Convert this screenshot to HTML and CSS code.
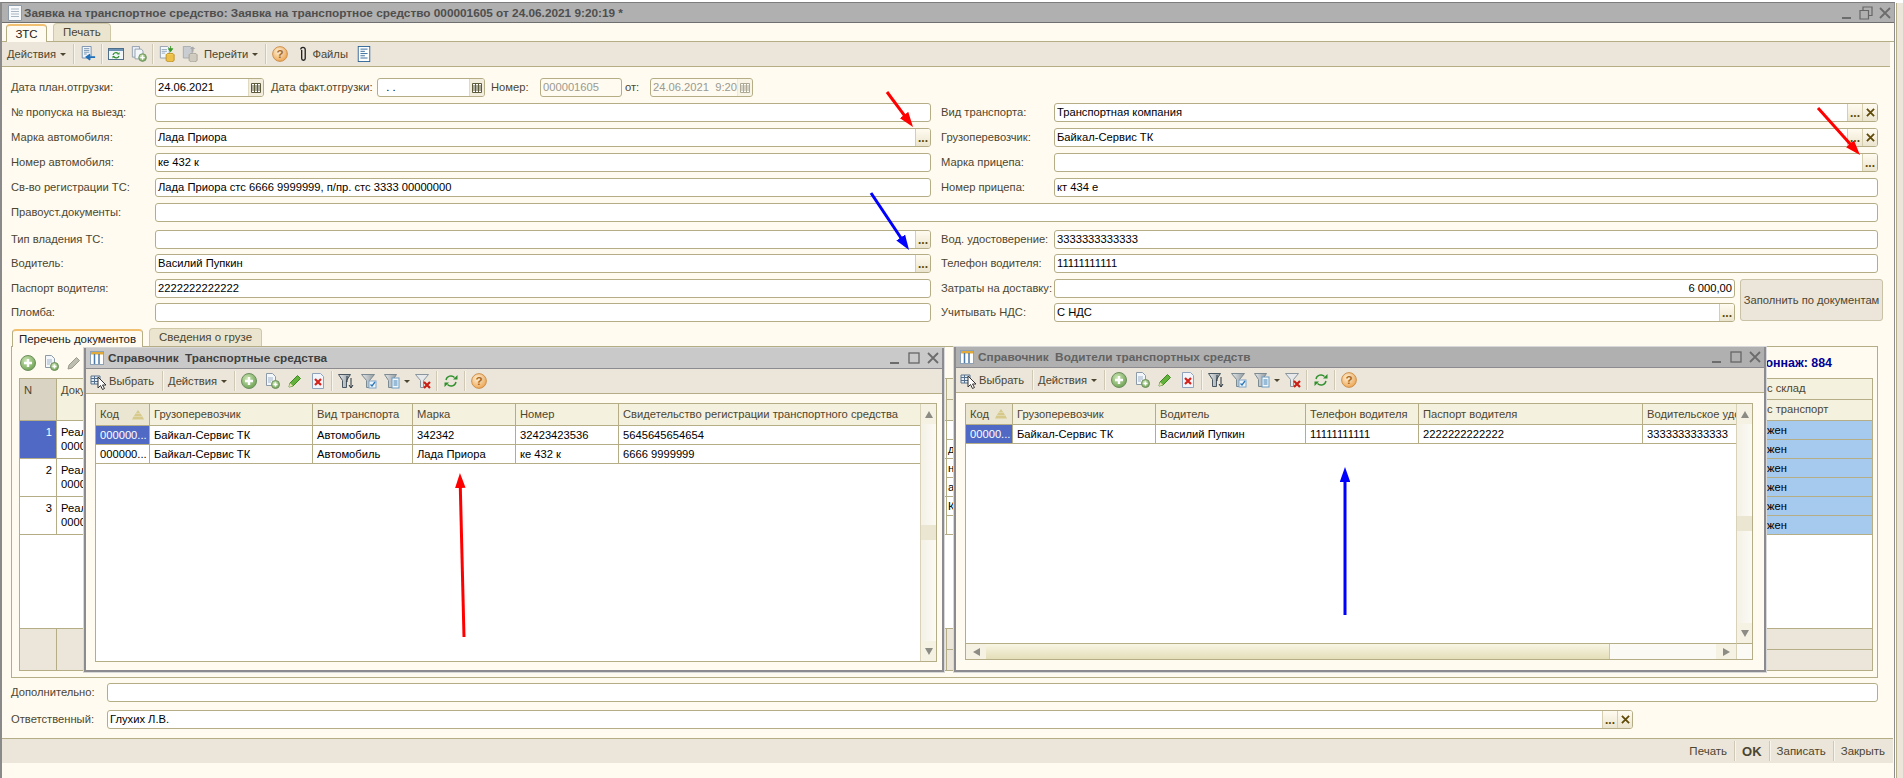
FILE: index.html
```html
<!DOCTYPE html>
<html lang="ru">
<head>
  <meta charset="UTF-8">
  <title>Заявка на транспортное средство</title>
  <link rel="stylesheet" href="styles.css">
</head>
<body>

<svg class="defs" xmlns="http://www.w3.org/2000/svg">
  <defs>
    <radialGradient id="g-green" cx="40%" cy="35%" r="70%"><stop offset="0" stop-color="#cfe8b8"/><stop offset="1" stop-color="#6a9f4e"/></radialGradient>
    <radialGradient id="g-orange" cx="40%" cy="35%" r="70%"><stop offset="0" stop-color="#fdf0d8"/><stop offset="1" stop-color="#eda24c"/></radialGradient>
    <linearGradient id="g-funnel" x1="0" x2="1"><stop offset="0" stop-color="#e8e8e8"/><stop offset="1" stop-color="#8e9aa0"/></linearGradient>
    <marker id="head-red" viewBox="0 0 10 7" refX="6" refY="3.5" markerWidth="5" markerHeight="3.5" orient="auto"><path d="M0 0L10 3.5L0 7z" fill="#f00"/></marker>
    <marker id="head-blue" viewBox="0 0 10 7" refX="6" refY="3.5" markerWidth="5" markerHeight="3.5" orient="auto"><path d="M0 0L10 3.5L0 7z" fill="#00f"/></marker>
  </defs>
  <symbol id="i-plus" viewBox="0 0 16 16"><circle cx="8" cy="8" r="7.5" fill="url(#g-green)" stroke="#6f8f60"/><path d="M8 4v8M4 8h8" stroke="#fff" stroke-width="2.4"/></symbol>
  <symbol id="i-docplus" viewBox="0 0 16 16"><path d="M2.500 .5h6l3 3v9h-9z" fill="#f4f7fa" stroke="#8d9aa8"/><path d="M4 5h5M4 7h5M4 9h3" stroke="#9fb4c8"/><circle cx="11.500" cy="11.500" r="4" fill="url(#g-green)" stroke="#6f8f60"/><path d="M11.500 9.500v4M9.500 11.500h4" stroke="#fff" stroke-width="1.400"/></symbol>
  <symbol id="i-pencil" viewBox="0 0 16 16"><path d="M2 14l1-4 7.500-7.500 3 3L6 13z" fill="#62b23c" stroke="#3e8a22"/><path d="M2 14l1-4 3 3z" fill="#e8e2b0"/></symbol>
  <symbol id="i-pencil-off" viewBox="0 0 16 16"><path d="M2 14l1-4 7.500-7.500 3 3L6 13z" fill="#bdbdb0" stroke="#9a9a8c"/></symbol>
  <symbol id="i-docx" viewBox="0 0 16 16"><path d="M2.500 .5h8l3 3v12h-11z" fill="#f2f6fb" stroke="#8fa3bc"/><path d="M5 6l6 6M11 6l-6 6" stroke="#d3231a" stroke-width="2.200"/></symbol>
  <symbol id="i-f-sort" viewBox="0 0 16 16"><path d="M.5 1.500h12l-4 6v7h-4v-7z" fill="url(#g-funnel)" stroke="#4a5660"/><path d="M13 5v9M11 12l2 3 2-3" stroke="#23303c" fill="none"/><path d="M9 3v6" stroke="#23303c"/></symbol>
  <symbol id="i-f-check" viewBox="0 0 16 16"><path d="M.5 1.500h13l-5 6v7h-3v-7z" fill="url(#g-funnel)" stroke="#7c8a92"/><rect x="8" y="8" width="7" height="7" fill="#eef5fb" stroke="#7fa6c8"/><path d="M9.500 11.500l1.500 1.500 3-4" stroke="#2b78b8" fill="none" stroke-width="1.300"/></symbol>
  <symbol id="i-f-list" viewBox="0 0 16 16"><path d="M.5 1.500h12l-4 6v7h-4v-7z" fill="url(#g-funnel)" stroke="#7c8a92"/><rect x="8" y="5" width="7" height="10" fill="#f2f7fb" stroke="#6e9cc0"/><path d="M9.500 8h4M9.500 10h4M9.500 12h4" stroke="#3f80b4"/></symbol>
  <symbol id="i-f-x" viewBox="0 0 16 16"><path d="M.5 1.500h13l-5 6v7h-3v-7z" fill="#e6e8ea" stroke="#8a969e"/><path d="M9 9l6 6M15 9l-6 6" stroke="#c81e14" stroke-width="2.200"/></symbol>
  <symbol id="i-refresh" viewBox="0 0 16 16"><path d="M3 7A5 5 0 0 1 11.500 4.500M13 9A5 5 0 0 1 4.500 11.500" fill="none" stroke="#2f8f2c" stroke-width="1.400"/><path d="M10 6.500h4.500V2zM6 9.500H1.500V14z" fill="#2f8f2c"/></symbol>
  <symbol id="i-help" viewBox="0 0 18 18"><circle cx="9" cy="9" r="8.300" fill="url(#g-orange)" stroke="#c98a44"/><text x="9" y="13.500" text-anchor="middle" font-family="Liberation Sans" font-weight="700" font-size="13" fill="#a5692a">?</text></symbol>
  <symbol id="i-select" viewBox="0 0 18 18"><path d="M1 4h9v8H1z" fill="#e6edf4" stroke="#55708c"/><path d="M1 6.500h9M1 9.500h9M4.500 4v8" stroke="#55708c"/><path d="M8 5v11l2.500-2.500 2 4 2-1-2-3.500H16z" fill="#fff" stroke="#333"/></symbol>
  <symbol id="i-doc-back" viewBox="0 0 18 18"><path d="M2.500 .5h10v13h-10z" fill="#f2f6fa" stroke="#6d8aa8"/><path d="M4.500 3h6M4.500 5h6M4.500 7h6M4.500 9h3" stroke="#6f8eac"/><path d="M17 12.500H9M11.500 9.500l-4 3 4 3" fill="none" stroke="#1f6fb8" stroke-width="2.200"/></symbol>
  <symbol id="i-win-refresh" viewBox="0 0 16 16"><rect x=".5" y="2.500" width="15" height="11" fill="#f1f6fa" stroke="#4d6f8c"/><path d="M1 3h14v2H1z" fill="#6d93b4"/><path d="M5 9a3 3 0 0 1 5-1.500M11 10a3 3 0 0 1-5 1" fill="none" stroke="#2f8f2c" stroke-width="1.200"/><path d="M9 8.500h2.500V6zM7 10H4.500v2.500z" fill="#2f8f2c"/></symbol>
  <symbol id="i-docs-plus" viewBox="0 0 18 18"><path d="M1.500 .5h8v12h-8z" fill="#e8eef4" stroke="#8d9aa8"/><path d="M4.500 3.500h7l2 2v9h-9z" fill="#f4f7fa" stroke="#8d9aa8"/><circle cx="13" cy="13" r="4.300" fill="url(#g-green)" stroke="#6f8f60"/><path d="M13 10.500v5M10.500 13h5" stroke="#fff" stroke-width="1.500"/></symbol>
  <symbol id="i-doc-coins" viewBox="0 0 18 18"><path d="M1.500 .5h8l2 2v11h-10z" fill="#f4f7fa" stroke="#8d9aa8"/><path d="M3 4h6M3 6h6M3 8h4" stroke="#8fa6bc"/><path d="M13 0v4M10.500 3l2.500 3.500L15.500 3z" fill="#3c9a2c" stroke="#3c9a2c"/><ellipse cx="12.500" cy="10" rx="4.500" ry="1.800" fill="#f2cd55" stroke="#b98f20"/><path d="M8 10v6c0 1 2 1.800 4.500 1.800S17 17 17 16v-6" fill="#eec04a" stroke="#b98f20"/></symbol>
  <symbol id="i-doc-coins-off" viewBox="0 0 18 18"><path d="M1.500 .5h8l2 2v11h-10z" fill="#c9ccd0" stroke="#a5a8ac"/><path d="M9 3.500l3-3 3 3h-2v3h-2v-3z" fill="#aaa"/><ellipse cx="12.500" cy="10" rx="4.500" ry="1.800" fill="#d4d0c4" stroke="#a5a296"/><path d="M8 10v6c0 1 2 1.800 4.500 1.800S17 17 17 16v-6" fill="#cfcbbf" stroke="#a5a296"/></symbol>
  <symbol id="i-clip" viewBox="0 0 12 18"><path d="M4 4v9.500a2 2 0 0 0 4 0V3.500a2.500 2.500 0 0 0-5 0" transform="translate(.5 .5)" fill="none" stroke="#222" stroke-width="1.500"/></symbol>
  <symbol id="i-report" viewBox="0 0 16 18"><rect x="1.500" y=".5" width="13" height="17" fill="#fff" stroke="#275f94"/><path d="M4 3.500h8M4 6h5M4 8.500h8M4 11h5M4 13.500h8" stroke="#275f94"/></symbol>
  <symbol id="i-form" viewBox="0 0 14 16"><path d="M.5 .5h13v15H.5z" fill="#f7f9fb" stroke="#8e9ba8"/><path d="M3 4h8M3 6.500h8M3 9h8M3 11.500h8" stroke="#a9b6c2"/></symbol>
  <symbol id="i-catalog" viewBox="0 0 14 14"><rect x=".5" y=".5" width="13" height="13" fill="#fff" stroke="#8da2b6"/><path d="M1 1h12v2.500H1z" fill="#e0a93c"/><path d="M4.500 3v10M9 3v10" stroke="#4d7aa5" stroke-width="1.500"/></symbol>
  <symbol id="i-cal" viewBox="0 0 12 12"><path d="M1.500 1.500h9v9h-9zM1.500 4h9M1.500 6h9M1.500 8h9M4.500 1.500v9M7.500 1.500v9" fill="#fff" stroke="#5e5a3c"/></symbol>
  <symbol id="i-x" viewBox="0 0 10 10"><path d="M1 1l8 8M9 1l-8 8" stroke="#5f4a08" stroke-width="2"/></symbol>
  <symbol id="i-min" viewBox="0 0 14 14"><path d="M2 12h9" stroke="#6c6c6c" stroke-width="2"/></symbol>
  <symbol id="i-max" viewBox="0 0 14 14"><rect x="2" y="2" width="10" height="10" fill="none" stroke="#666" stroke-width="1.300"/></symbol>
  <symbol id="i-restore" viewBox="0 0 14 14"><path d="M1 4.500h8.500V13H1zM4 4.500V1h9v8.500H9.500" fill="none" stroke="#666" stroke-width="1.200"/></symbol>
  <symbol id="i-close" viewBox="0 0 14 14"><path d="M2 2l10 10M12 2L2 12" stroke="#6c6c6c" stroke-width="1.800"/></symbol>
  <symbol id="i-sort" viewBox="0 0 14 10"><path d="M7 0l2 3H5zM4.500 3.500h5L11 6H3zM2.500 6.500h9L13 9.500H1z" fill="#d6c98a"/></symbol>
</svg>

<div class="page">
  <div class="window">
    <div class="titlebar">
      <svg class="title-icon"><use href="#i-form"/></svg>
      <span class="title-text">Заявка на транспортное средство: Заявка на транспортное средство 000001605 от 24.06.2021 9:20:19 *</span>
      <div class="win-controls main-controls">
        <svg><use href="#i-min"/></svg><svg><use href="#i-restore"/></svg><svg><use href="#i-close"/></svg>
      </div>
    </div>

    <div class="tabs top-tabs">
      <div class="tab active top-first">ЗТС</div>
      <div class="tab">Печать</div>
    </div>

    <div class="toolbar main-toolbar">
      <span class="tb-text">Действия</span><i class="caret"></i>
      <i class="sep"></i>
      <span class="tb-btn"><svg><use href="#i-doc-back"/></svg></span>
      <i class="sep"></i>
      <span class="tb-btn"><svg><use href="#i-win-refresh"/></svg></span>
      <span class="tb-btn"><svg><use href="#i-docs-plus"/></svg></span>
      <i class="sep"></i>
      <span class="tb-btn"><svg><use href="#i-doc-coins"/></svg></span>
      <span class="tb-btn"><svg><use href="#i-doc-coins-off"/></svg></span>
      <span class="tb-text goto">Перейти</span><i class="caret"></i>
      <i class="sep"></i>
      <span class="tb-btn"><svg><use href="#i-help"/></svg></span>
      <span class="tb-btn"><svg><use href="#i-clip"/></svg></span>
      <span class="tb-text files">Файлы</span>
      <span class="tb-btn"><svg><use href="#i-report"/></svg></span>
    </div>

    <div class="date-row">
      <label class="lbl lbl-first">Дата план.отгрузки:</label>
      <div class="field w-plan"><span class="val">24.06.2021</span><span class="cal"><svg><use href="#i-cal"/></svg></span></div>
      <label class="lbl lbl-fact">Дата факт.отгрузки:</label>
      <div class="field w-fact"><span class="val">&nbsp; . .</span><span class="cal"><svg><use href="#i-cal"/></svg></span></div>
      <label class="lbl lbl-num">Номер:</label>
      <div class="field w-num off"><span class="val">000001605</span></div>
      <label class="lbl lbl-from">от:</label>
      <div class="field w-from off"><span class="val">24.06.2021&nbsp; 9:20</span><span class="cal"><svg><use href="#i-cal"/></svg></span></div>
    </div>

    <div class="form-grid">
      <label class="lbl">№ пропуска на выезд:</label>
      <div class="field"></div>
      <label class="lbl lbl-r">Вид транспорта:</label>
      <div class="field span-2"><span class="val">Транспортная компания</span><button class="pick">...</button><button class="pick"><svg><use href="#i-x"/></svg></button></div>

      <label class="lbl">Марка автомобиля:</label>
      <div class="field"><span class="val">Лада Приора</span><button class="pick">...</button></div>
      <label class="lbl lbl-r">Грузоперевозчик:</label>
      <div class="field span-2"><span class="val">Байкал-Сервис ТК</span><button class="pick">...</button><button class="pick"><svg><use href="#i-x"/></svg></button></div>

      <label class="lbl">Номер автомобиля:</label>
      <div class="field"><span class="val">ке 432 к</span></div>
      <label class="lbl lbl-r">Марка прицепа:</label>
      <div class="field span-2"><button class="pick">...</button></div>

      <label class="lbl">Св-во регистрации ТС:</label>
      <div class="field"><span class="val">Лада Приора стс 6666 9999999, п/пр. стс 3333 00000000</span></div>
      <label class="lbl lbl-r">Номер прицепа:</label>
      <div class="field span-2"><span class="val">кт 434 е</span></div>

      <label class="lbl">Правоуст.документы:</label>
      <div class="field span-all"></div>

      <label class="lbl">Тип владения ТС:</label>
      <div class="field"><button class="pick">...</button></div>
      <label class="lbl lbl-r">Вод. удостоверение:</label>
      <div class="field span-2"><span class="val">3333333333333</span></div>

      <label class="lbl">Водитель:</label>
      <div class="field"><span class="val">Василий Пупкин</span><button class="pick">...</button></div>
      <label class="lbl lbl-r">Телефон водителя:</label>
      <div class="field span-2"><span class="val">11111111111</span></div>

      <label class="lbl">Паспорт водителя:</label>
      <div class="field"><span class="val">2222222222222</span></div>
      <label class="lbl lbl-r">Затраты на доставку:</label>
      <div class="field"><span class="val num">6 000,00</span></div>
      <button class="fill-btn">Заполнить по документам</button>

      <label class="lbl">Пломба:</label>
      <div class="field"></div>
      <label class="lbl lbl-r">Учитывать НДС:</label>
      <div class="field"><span class="val">С НДС</span><button class="pick">...</button></div>
    </div>

    <div class="tabs doc-tabs">
      <div class="tab active doc-first">Перечень документов</div>
      <div class="tab">Сведения о грузе</div>
    </div>

    <div class="doc-panel">
      <div class="doc-tools">
        <span class="tb-btn"><svg><use href="#i-plus"/></svg></span>
        <span class="tb-btn"><svg><use href="#i-docplus"/></svg></span>
        <span class="tb-btn"><svg><use href="#i-pencil-off"/></svg></span>
        <span class="tonnage">Тоннаж: 884</span>
      </div>
      <div class="doc-table">
        <div class="doc-row head">
          <div class="c-n sel-head">N</div>
          <div class="c-doc">Документ</div>
          <div class="c-stack">
            <div class="sub"><span class="c-mid"></span><span class="c-last">с склад</span></div>
            <div class="sub"><span class="c-mid"></span><span class="c-last">с транспорт</span></div>
          </div>
        </div>
        <div class="doc-row">
          <div class="c-n current">1</div>
          <div class="c-doc">Реал<br>0000</div>
          <div class="c-stack">
            <div class="sub"><span class="c-mid"></span><span class="c-last mark">жен</span></div>
            <div class="sub"><span class="c-mid">д</span><span class="c-last mark">жен</span></div>
          </div>
        </div>
        <div class="doc-row">
          <div class="c-n">2</div>
          <div class="c-doc">Реал<br>0000</div>
          <div class="c-stack">
            <div class="sub"><span class="c-mid">н,</span><span class="c-last mark">жен</span></div>
            <div class="sub"><span class="c-mid">а</span><span class="c-last mark">жен</span></div>
          </div>
        </div>
        <div class="doc-row">
          <div class="c-n">3</div>
          <div class="c-doc">Реал<br>0000</div>
          <div class="c-stack">
            <div class="sub"><span class="c-mid">К</span><span class="c-last mark">жен</span></div>
            <div class="sub"><span class="c-mid"></span><span class="c-last mark">жен</span></div>
          </div>
        </div>
        <div class="doc-fill"></div>
        <div class="doc-row foot">
          <div class="c-n"></div>
          <div class="c-doc"></div>
          <div class="c-stack">
            <div class="sub"><span class="c-mid"></span><span class="c-last"></span></div>
            <div class="sub"><span class="c-mid"></span><span class="c-last"></span></div>
          </div>
        </div>
      </div>
    </div>

    <div class="extra-row">
      <label class="lbl lbl-extra">Дополнительно:</label>
      <div class="field grow"></div>
    </div>
    <div class="extra-row resp-row">
      <label class="lbl lbl-extra">Ответственный:</label>
      <div class="field w-resp"><span class="val">Глухих Л.В.</span><button class="pick">...</button><button class="pick"><svg><use href="#i-x"/></svg></button></div>
    </div>

    <div class="footer">
      <span class="foot-btn">Печать</span><i class="sep"></i>
      <span class="foot-btn ok">OK</span><i class="sep"></i>
      <span class="foot-btn">Записать</span><i class="sep"></i>
      <span class="foot-btn">Закрыть</span>
    </div>
  </div>

  <!-- окна справочников -->
  <div class="popup popup-cars">
    <div class="pop-title">
      <svg class="pop-icon"><use href="#i-catalog"/></svg>
      <span>Справочник&nbsp; Транспортные средства</span>
      <div class="win-controls"><svg><use href="#i-min"/></svg><svg><use href="#i-max"/></svg><svg><use href="#i-close"/></svg></div>
    </div>
    <div class="toolbar pop-toolbar">
      <span class="pop-select"><svg><use href="#i-select"/></svg></span><span class="tb-text">Выбрать</span>
      <i class="sep sep-wide"></i>
      <span class="tb-text">Действия</span><i class="caret"></i>
      <i class="sep"></i>
      <span class="tb-btn"><svg><use href="#i-plus"/></svg></span>
      <span class="tb-btn"><svg><use href="#i-docplus"/></svg></span>
      <span class="tb-btn"><svg><use href="#i-pencil"/></svg></span>
      <span class="tb-btn"><svg><use href="#i-docx"/></svg></span>
      <i class="sep"></i>
      <span class="tb-btn"><svg><use href="#i-f-sort"/></svg></span>
      <span class="tb-btn"><svg><use href="#i-f-check"/></svg></span>
      <span class="tb-btn"><svg><use href="#i-f-list"/></svg></span><i class="caret caret-tight"></i>
      <span class="tb-btn"><svg><use href="#i-f-x"/></svg></span>
      <i class="sep"></i>
      <span class="tb-btn"><svg><use href="#i-refresh"/></svg></span>
      <i class="sep"></i>
      <span class="tb-btn"><svg><use href="#i-help"/></svg></span>
    </div>
    <div class="pop-body">
      <div class="ptable">
        <div class="pgrid">
          <div class="prow phead">
            <span class="sort-cell">Код<svg class="sort"><use href="#i-sort"/></svg></span><span>Грузоперевозчик</span><span>Вид транспорта</span><span>Марка</span><span>Номер</span><span>Свидетельство регистрации транспортного средства</span>
          </div>
          <div class="prow">
            <span class="cur">000000...</span><span>Байкал-Сервис ТК</span><span>Автомобиль</span><span>342342</span><span>32423423536</span><span>5645645654654</span>
          </div>
          <div class="prow">
            <span>000000...</span><span>Байкал-Сервис ТК</span><span>Автомобиль</span><span>Лада Приора</span><span>ке 432 к</span><span>6666 9999999</span>
          </div>
        </div>
        <div class="vscroll">
          <span class="sb-btn"><i class="tri-up"></i></span><span class="sb-gap"></span><span class="sb-thumb"></span><span class="sb-gap"></span><span class="sb-btn"><i class="tri-down"></i></span>
        </div>
      </div>
    </div>
  </div>

  <div class="popup popup-drivers">
    <div class="pop-title">
      <svg class="pop-icon"><use href="#i-catalog"/></svg>
      <span>Справочник&nbsp; Водители транспортных средств</span>
      <div class="win-controls"><svg><use href="#i-min"/></svg><svg><use href="#i-max"/></svg><svg><use href="#i-close"/></svg></div>
    </div>
    <div class="toolbar pop-toolbar">
      <span class="pop-select"><svg><use href="#i-select"/></svg></span><span class="tb-text">Выбрать</span>
      <i class="sep sep-wide"></i>
      <span class="tb-text">Действия</span><i class="caret"></i>
      <i class="sep"></i>
      <span class="tb-btn"><svg><use href="#i-plus"/></svg></span>
      <span class="tb-btn"><svg><use href="#i-docplus"/></svg></span>
      <span class="tb-btn"><svg><use href="#i-pencil"/></svg></span>
      <span class="tb-btn"><svg><use href="#i-docx"/></svg></span>
      <i class="sep"></i>
      <span class="tb-btn"><svg><use href="#i-f-sort"/></svg></span>
      <span class="tb-btn"><svg><use href="#i-f-check"/></svg></span>
      <span class="tb-btn"><svg><use href="#i-f-list"/></svg></span><i class="caret caret-tight"></i>
      <span class="tb-btn"><svg><use href="#i-f-x"/></svg></span>
      <i class="sep"></i>
      <span class="tb-btn"><svg><use href="#i-refresh"/></svg></span>
      <i class="sep"></i>
      <span class="tb-btn"><svg><use href="#i-help"/></svg></span>
    </div>
    <div class="pop-body">
      <div class="ptable with-hscroll">
        <div class="pgrid">
          <div class="prow phead">
            <span class="sort-cell">Код<svg class="sort"><use href="#i-sort"/></svg></span><span>Грузоперевозчик</span><span>Водитель</span><span>Телефон водителя</span><span>Паспорт водителя</span><span>Водительское удостоверение</span>
          </div>
          <div class="prow">
            <span class="cur">00000...</span><span>Байкал-Сервис ТК</span><span>Василий Пупкин</span><span>11111111111</span><span>2222222222222</span><span>3333333333333</span>
          </div>
        </div>
        <div class="vscroll">
          <span class="sb-btn"><i class="tri-up"></i></span><span class="sb-gap"></span><span class="sb-thumb"></span><span class="sb-gap"></span><span class="sb-btn"><i class="tri-down"></i></span>
        </div>
        <div class="hscroll">
          <span class="sb-btn"><i class="tri-left"></i></span><span class="h-thumb"></span><span class="sb-gap"></span><span class="sb-btn"><i class="tri-right"></i></span>
        </div>
        <span class="sb-corner"></span>
      </div>
    </div>
  </div>

  <div class="side-strip"></div>

  <!-- стрелки поверх скриншота -->
  <svg class="arrows" viewBox="0 0 1903 778">
    <line class="a-red" x1="887" y1="92" x2="909.400" y2="122.200"/>
    <line class="a-red" x1="1818" y1="108" x2="1856" y2="150.500"/>
    <line class="a-blue" x1="871" y1="193" x2="905.700" y2="245"/>
    <line class="a-red" x1="464" y1="637" x2="460.100" y2="479"/>
    <line class="a-blue" x1="1345" y1="615" x2="1345" y2="473"/>
  </svg>
</div>

</body>
</html>
```

FILE: styles.css
```css
* {
  box-sizing: border-box;
}

body {
  margin: 0;
  font-family: 'Liberation Sans', Arial, sans-serif;
  font-size: 11.2px;
  color: #000;
  background: #fffbf0;
}

.defs {
  position: absolute;
  width: 0;
  height: 0;
}

.page {
  position: relative;
  width: 1903px;
  height: 778px;
  overflow: hidden;
  background: #fff;
}

.window {
  width: 1895px;
  height: 776px;
  margin-top: 2px;
  display: flex;
  flex-direction: column;
  background: #fffbf0;
  border-left: 2px solid #8a8a8a;
  border-top: 1px solid #7d7d7d;
  border-right: 1px solid #8f8f8f;
}

.side-strip {
  position: absolute;
  top: 3px;
  right: 0;
  bottom: 0;
  width: 7px;
  background: #ebe5da;
  border-left: 1px solid #b5ad85;
}

/* Title */
.titlebar {
  flex: none;
  height: 20px;
  display: flex;
  align-items: center;
  padding-left: 6px;
  font-size: 11.8px;
  background: #b0b0b0;
  border-bottom: 1px solid #6f6f6f;
  color: #4e4e4e;
  font-weight: 700;
}

.title-icon {
  width: 14px;
  height: 16px;
  margin-right: 2px;
}

.win-controls {
  margin-left: auto;
  display: flex;
  gap: 5px;
  padding-right: 2px;
}

.win-controls svg {
  width: 14px;
  height: 14px;
}

/* Tabs */
.tabs {
  flex: none;
  display: flex;
  gap: 6px;
  align-items: flex-end;
  border-bottom: 1px solid #b5ad85;
}

.top-tabs {
  height: 19px;
  padding-left: 4px;
}

.doc-tabs {
  height: 18px;
  margin-top: 6px;
  padding-left: 10px;
  width: 1876px;
  border-bottom: none;
}

.tab {
  height: 18px;
  padding: 0 9px;
  line-height: 17px;
  font-size: 11.5px;
  color: #4c4630;
  background: #ebe5cf;
  border: 1px solid #cfc8a6;
  border-bottom: none;
  border-radius: 4px 4px 0 0;
}

.tab.active {
  color: #222;
  background: #fffbf0;
  border-color: #b5ad85;
  border-top: 2px solid #f0c070;
  position: relative;
  top: 1px;
}

.top-first {
  width: 41px;
  padding: 0;
  text-align: center;
}

.doc-first {
  width: 131px;
  padding: 0;
  text-align: center;
}

/* Toolbars */
.toolbar {
  flex: none;
  display: flex;
  align-items: center;
  background: #ebe5da;
  border-bottom: 1px solid #b5ad85;
}

.main-toolbar {
  height: 25px;
  width: 1888px;
  padding-left: 5px;
}

.tb-text {
  color: #4c4630;
  white-space: nowrap;
}

.goto {
  margin-left: 3px;
}

.files {
  margin-left: -2px;
  margin-right: 5px;
}

.tb-btn {
  flex: none;
  width: 23px;
  display: flex;
  justify-content: center;
  align-items: center;
}

.tb-btn svg {
  width: 16px;
  height: 16px;
}

.caret {
  flex: none;
  width: 6px;
  height: 0;
  margin: 0 5px 0 4px;
  border-top: 3px solid #4c4630;
  border-left: 3px solid transparent;
  border-right: 3px solid transparent;
}

.caret-tight {
  margin: 0 1px 0 1px;
}

.sep {
  flex: none;
  width: 1px;
  height: 20px;
  margin: 0 2px;
  background: #cfc8b4;
  box-shadow: 1px 0 0 #f8f5ec;
}

/* Form */
.lbl {
  color: #4c4630;
  line-height: 19px;
  white-space: nowrap;
}

.field {
  height: 19px;
  display: flex;
  align-items: stretch;
  overflow: hidden;
  background: #fff;
  border: 1px solid #b5ad85;
  border-radius: 3px;
}

.val {
  flex: 1;
  padding-left: 2px;
  line-height: 17px;
  white-space: nowrap;
  overflow: hidden;
}

.num {
  text-align: right;
  padding-right: 2px;
}

.off {
  background: #fffbf0;
}

.off .val {
  color: #9a9a90;
}

.pick {
  flex: none;
  width: 15px;
  margin-left: auto;
  padding: 0;
  display: flex;
  align-items: center;
  justify-content: center;
  font: 700 12px 'Liberation Sans', sans-serif;
  color: #5f4a08;
  background: linear-gradient(#fffbf0, #ebe5cf);
  border: none;
  border-left: 1px solid #d5cfb0;
}

.val + .pick + .pick,
.pick + .pick {
  margin-left: 0;
}

.pick svg {
  width: 9px;
  height: 9px;
}

.cal {
  flex: none;
  width: 15px;
  display: flex;
  align-items: center;
  justify-content: center;
  background: #f2eddc;
  border-left: 1px solid #e0dac0;
}

.off .cal {
  opacity: .5;
}

.cal svg {
  width: 12px;
  height: 12px;
}

.date-row {
  flex: none;
  display: flex;
  margin-top: 11px;
  padding-left: 9px;
}

.lbl-first {
  width: 144px;
}

.w-plan {
  width: 109px;
}

.lbl-fact {
  width: 113px;
  padding-left: 7px;
}

.w-fact {
  width: 108px;
}

.lbl-num {
  width: 55px;
  padding-left: 6px;
}

.w-num {
  width: 82px;
}

.lbl-from {
  width: 28px;
  padding-left: 3px;
}

.w-from {
  width: 103px;
}

.form-grid {
  flex: none;
  display: grid;
  grid-template-columns: 144px 776px 123px 681px 143px;
  grid-template-rows: repeat(4, 25px) 27px 24px 25px 24px 19px;
  margin-top: 6px;
  padding-left: 9px;
  align-items: start;
}

.lbl-r {
  padding-left: 10px;
}

.span-2 {
  grid-column: span 2;
}

.span-all {
  grid-column: 2 / span 4;
}

.fill-btn {
  grid-row: span 2;
  width: 143px;
  height: 42px;
  margin-left: 5px;
  padding: 0;
  font: 11.2px 'Liberation Sans', sans-serif;
  color: #4c4630;
  background: #ebe5da;
  border: 1px solid #c9c2a6;
  border-radius: 3px;
}

/* Document panel */
.doc-panel {
  flex: none;
  width: 1867px;
  height: 332px;
  margin-left: 9px;
  padding: 0 4px 6px 7px;
  display: flex;
  flex-direction: column;
  background: #fffbf0;
  border: 1px solid #b5ad85;
}

.doc-tools {
  flex: none;
  height: 31px;
  display: flex;
  align-items: center;
  margin-left: -3px;
}

.tonnage {
  margin-left: auto;
  margin-right: 41px;
  font-weight: 700;
  font-size: 12.4px;
  color: #000096;
}

.doc-table {
  flex: 1;
  display: flex;
  flex-direction: column;
  border: 1px solid #b5ad85;
  background: #fff;
}

.doc-row {
  flex: none;
  height: 38px;
  display: flex;
  border-bottom: 1px solid #b5ad85;
}

.doc-row.head {
  height: 42px;
  color: #4c4630;
  background: #f5f1df;
}

.doc-row.foot {
  height: 42px;
  margin-top: auto;
  background: #ebe5da;
  border-top: 1px solid #b5ad85;
  border-bottom: none;
}

.doc-fill {
  flex: 1;
}

.c-n {
  flex: none;
  width: 37px;
  padding: 4px;
  line-height: 14px;
  text-align: right;
  border-right: 1px solid #b5ad85;
}

.head .c-n {
  text-align: left;
}

.sel-head {
  background: #d8d3c2;
}

.current {
  color: #fff;
  background: #5069c4;
}

.c-doc {
  flex: none;
  width: 889px;
  padding: 4px;
  line-height: 14px;
}

.c-stack {
  flex: 1;
  display: flex;
  flex-direction: column;
}

.sub {
  flex: 1;
  display: flex;
  line-height: 18px;
  border-bottom: 1px solid #b5ad85;
}

.sub:last-child {
  border-bottom: none;
}

.c-mid {
  flex: 1;
  padding-left: 1px;
  border-left: 1px solid #b5ad85;
}

.c-last {
  flex: none;
  width: 133px;
  padding-left: 27px;
  border-left: 1px solid #b5ad85;
}

.mark {
  background: #a6c9ee;
}

/* Bottom fields */
.extra-row {
  flex: none;
  display: flex;
  margin-top: 5px;
  padding-left: 9px;
}

.resp-row {
  margin-top: 8px;
}

.lbl-extra {
  width: 96px;
}

.grow {
  width: 1771px;
}

.w-resp {
  width: 1526px;
}

.footer {
  flex: none;
  width: 1891px;
  height: 25px;
  margin-top: 9px;
  display: flex;
  align-items: center;
  justify-content: flex-end;
  padding-right: 1px;
  background: #ebe5da;
  border-top: 1px solid #b5ad85;
}

.foot-btn {
  padding: 0 7px;
  font-size: 11.5px;
  color: #4c4630;
}

.ok {
  font-size: 13px;
  font-weight: 700;
}

.footer .sep {
  margin: 0;
}

/* Catalog windows */
.popup {
  position: absolute;
  display: flex;
  flex-direction: column;
  background: #fffbf0;
  border: 2px solid #8c8c90;
  border-top: none;
  box-shadow: 0 0 0 1px #d8d8d8;
}

.popup-cars {
  left: 84px;
  top: 348px;
  width: 860px;
  height: 324px;
}

.popup-drivers {
  left: 954px;
  top: 347px;
  width: 812px;
  height: 325px;
}

.pop-title {
  flex: none;
  height: 21px;
  display: flex;
  align-items: center;
  padding-left: 4px;
  font-size: 11.8px;
  font-weight: 700;
  color: #3f3f3f;
  background: #c9c9c9;
  border-bottom: 1px solid #8c8c90;
}

.popup-drivers .pop-title {
  color: #626262;
  background: #b0b0b0;
}

.pop-icon {
  width: 14px;
  height: 14px;
  margin-right: 4px;
}

.pop-toolbar {
  height: 25px;
  padding-left: 4px;
}

.pop-select {
  flex: none;
  width: 19px;
  display: flex;
}

.pop-select svg {
  width: 18px;
  height: 18px;
}

.sep-wide {
  margin: 0 5px 0 8px;
}

.pop-body {
  flex: 1;
  display: flex;
  min-height: 0;
  padding: 9px 5px 8px 9px;
}

.popup-drivers .pop-body {
  padding: 10px 11px 10px 9px;
}

.ptable {
  flex: 1;
  display: grid;
  grid-template-columns: 1fr 16px;
  grid-template-rows: 1fr;
  min-width: 0;
  background: #fff;
  border: 1px solid #b5ad85;
}

.ptable.with-hscroll {
  grid-template-rows: 1fr 16px;
}

.pgrid {
  min-width: 0;
  overflow: hidden;
}

.prow {
  display: grid;
  height: 19px;
  line-height: 18px;
  border-bottom: 1px solid #b5ad85;
}

.popup-cars .prow {
  grid-template-columns: 54px 163px 100px 103px 103px 1fr;
}

.popup-drivers .prow {
  grid-template-columns: 47px 143px 150px 113px 224px 1fr;
}

.prow span {
  padding-left: 4px;
  overflow: hidden;
  white-space: nowrap;
  border-right: 1px solid #b5ad85;
}

.prow span:last-child {
  border-right: none;
}

.phead {
  height: 22px;
  line-height: 21px;
  color: #4c4630;
  background: #f5f1df;
}

.popup-drivers .phead {
  height: 21px;
  line-height: 20px;
}

.prow .sort-cell {
  display: flex;
  align-items: center;
  gap: 5px;
  background: #ebe6d2;
}

.popup-cars .sort-cell {
  gap: 12px;
}

.sort {
  width: 14px;
  height: 10px;
}

.prow .cur {
  color: #fff;
  background: #5069c4;
}

.vscroll {
  display: flex;
  flex-direction: column;
  background: linear-gradient(90deg, #f4f1e6, #fbfaf4);
  border-left: 1px solid #d8d2b8;
}

.sb-btn {
  flex: none;
  height: 20px;
  display: flex;
  align-items: center;
  justify-content: center;
  background: #f5f2e4;
}

.sb-gap {
  flex: 1;
}

.sb-thumb {
  flex: none;
  height: 15px;
  background: #ebe6d2;
}

.tri-up,
.tri-down {
  width: 0;
  border-left: 4px solid transparent;
  border-right: 4px solid transparent;
}

.tri-up {
  border-bottom: 7px solid #8c8c84;
}

.tri-down {
  border-top: 7px solid #8c8c84;
}

.tri-left,
.tri-right {
  height: 0;
  border-top: 4px solid transparent;
  border-bottom: 4px solid transparent;
}

.tri-left {
  border-right: 7px solid #8c8c84;
}

.tri-right {
  border-left: 7px solid #8c8c84;
}

.hscroll {
  display: flex;
  background: #fbfaf4;
  border-top: 1px solid #b5ad85;
}

.hscroll .sb-btn {
  width: 20px;
  height: auto;
}

.h-thumb {
  flex: none;
  width: 624px;
  background: linear-gradient(#f8f5e4, #e4deb8);
  border-right: 1px solid #cfc8a6;
}

.sb-corner {
  background: #fbfaf4;
  border-left: 1px solid #d8d2b8;
  border-top: 1px solid #b5ad85;
}

/* Annotation arrows */
.arrows {
  position: absolute;
  left: 0;
  top: 0;
  width: 1903px;
  height: 778px;
  pointer-events: none;
}

.a-red,
.a-blue {
  stroke-width: 3;
}

.a-red {
  stroke: #f00;
  marker-end: url(#head-red);
}

.a-blue {
  stroke: #00f;
  marker-end: url(#head-blue);
}
```
